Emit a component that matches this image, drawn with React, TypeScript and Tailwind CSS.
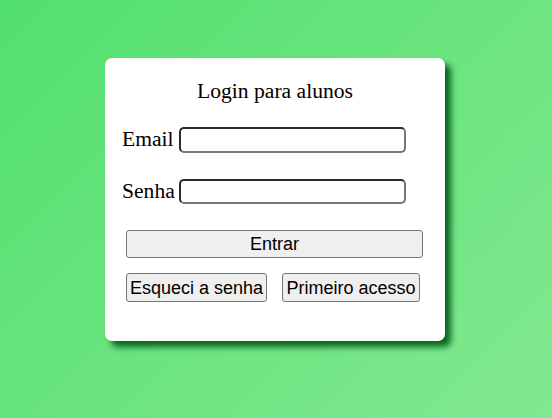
import React from 'react';

export default function App() {
  return (
    <div className="min-h-[418px] w-full bg-[linear-gradient(135deg,#52e06e,#82e890)] flex justify-center pt-[58px] pr-[2px] font-['Liberation_Serif',serif]">
      <div className="w-[340px] h-[283px] bg-white rounded-[7px] shadow-[6px_6px_6px_#0a6520] pt-[21px] flex flex-col">
        <h1 className="text-center text-[21.6px] leading-[25px] text-black">Login para alunos</h1>

        <div className="flex items-start gap-[5px] pl-[17px] mt-[23px]">
          <label className="text-[21.6px] leading-[24px] text-black">Email</label>
          <input
            type="email"
            className="w-[227px] h-[26px] rounded-[5px] border-2 border-t-[#2b2b2b] border-l-[#2b2b2b] border-b-[#777] border-r-[#777] bg-white outline-none"
          />
        </div>

        <div className="flex items-start gap-[4px] pl-[17px] mt-[26px]">
          <label className="text-[21.6px] leading-[24px] text-black">Senha</label>
          <input
            type="password"
            className="w-[227px] h-[25px] rounded-[5px] border-2 border-t-[#2b2b2b] border-l-[#2b2b2b] border-b-[#777] border-r-[#777] bg-white outline-none"
          />
        </div>

        <div className="pl-[21px] mt-[26px] font-['Liberation_Sans',Arial,sans-serif] text-[18px] text-black">
          <button className="w-[297px] h-[28px] bg-[#efefef] border border-[#767676] rounded-[3px] leading-none">
            Entrar
          </button>
          <div className="flex gap-[15px] mt-[15px]">
            <button className="w-[141px] h-[29px] bg-[#efefef] border border-[#767676] rounded-[3px] leading-none">
              Esqueci a senha
            </button>
            <button className="w-[138px] h-[29px] bg-[#efefef] border border-[#767676] rounded-[3px] leading-none">
              Primeiro acesso
            </button>
          </div>
        </div>
      </div>
    </div>
  );
}
